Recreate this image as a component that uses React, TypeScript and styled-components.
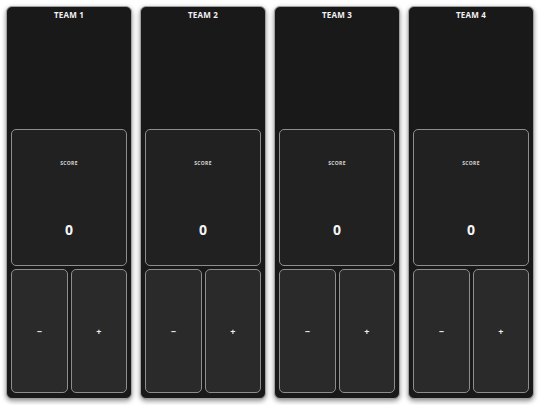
import styled, { createGlobalStyle } from 'styled-components';

const GlobalStyle = createGlobalStyle`
  html, body {
    margin: 0;
    padding: 0;
    background: #ffffff;
    font-family: 'Open Sans', 'Noto Sans', sans-serif;
  }
`;

const Board = styled.div`
  width: 540px;
  height: 405px;
  box-sizing: border-box;
  padding: 6px;
  display: grid;
  grid-template-columns: repeat(4, 1fr);
  gap: 8px;
`;

const Panel = styled.div`
  display: flex;
  flex-direction: column;
  box-sizing: border-box;
  background: #191919;
  border: 1px solid #a0a0a0;
  border-radius: 6px;
  box-shadow: 0 2px 5px rgba(0, 0, 0, 0.45);
  padding: 3px 4px 5px;
`;

const TeamName = styled.div`
  color: #f2f2f2;
  font-size: 8px;
  font-weight: 700;
  text-align: center;
  letter-spacing: 0.2px;
  line-height: 10px;
`;

const Spacer = styled.div`
  flex: 1;
`;

const ScoreBox = styled.div`
  height: 137px;
  box-sizing: border-box;
  background: #212121;
  border: 1px solid #8e8e8e;
  border-radius: 5px;
  display: flex;
  flex-direction: column;
  align-items: center;
`;

const ScoreLabel = styled.div`
  margin-top: 30px;
  color: #d8d8d8;
  font-size: 5px;
  font-weight: 700;
  letter-spacing: 0.3px;
  line-height: 7px;
`;

const ScoreValue = styled.div`
  margin-top: 54px;
  color: #f5f5f5;
  font-size: 14px;
  font-weight: 700;
  line-height: 18px;
`;

const ButtonRow = styled.div`
  margin-top: 3px;
  height: 124px;
  display: grid;
  grid-template-columns: 1fr 1fr;
  gap: 3px;
`;

const StepButton = styled.button`
  box-sizing: border-box;
  background: #2a2a2a;
  border: 1px solid #8e8e8e;
  border-radius: 5px;
  color: #f0f0f0;
  font-family: 'Open Sans', 'Noto Sans', sans-serif;
  font-size: 9px;
  font-weight: 700;
  padding: 0;
  cursor: pointer;
`;

const teams = ['TEAM 1', 'TEAM 2', 'TEAM 3', 'TEAM 4'];

const App = () => {
  return (
    <>
      <GlobalStyle />
      <Board>
        {teams.map(name => (
          <Panel key={name}>
            <TeamName>{name}</TeamName>
            <Spacer />
            <ScoreBox>
              <ScoreLabel>SCORE</ScoreLabel>
              <ScoreValue>0</ScoreValue>
            </ScoreBox>
            <ButtonRow>
              <StepButton>−</StepButton>
              <StepButton>+</StepButton>
            </ButtonRow>
          </Panel>
        ))}
      </Board>
    </>
  );
};

export default App;
